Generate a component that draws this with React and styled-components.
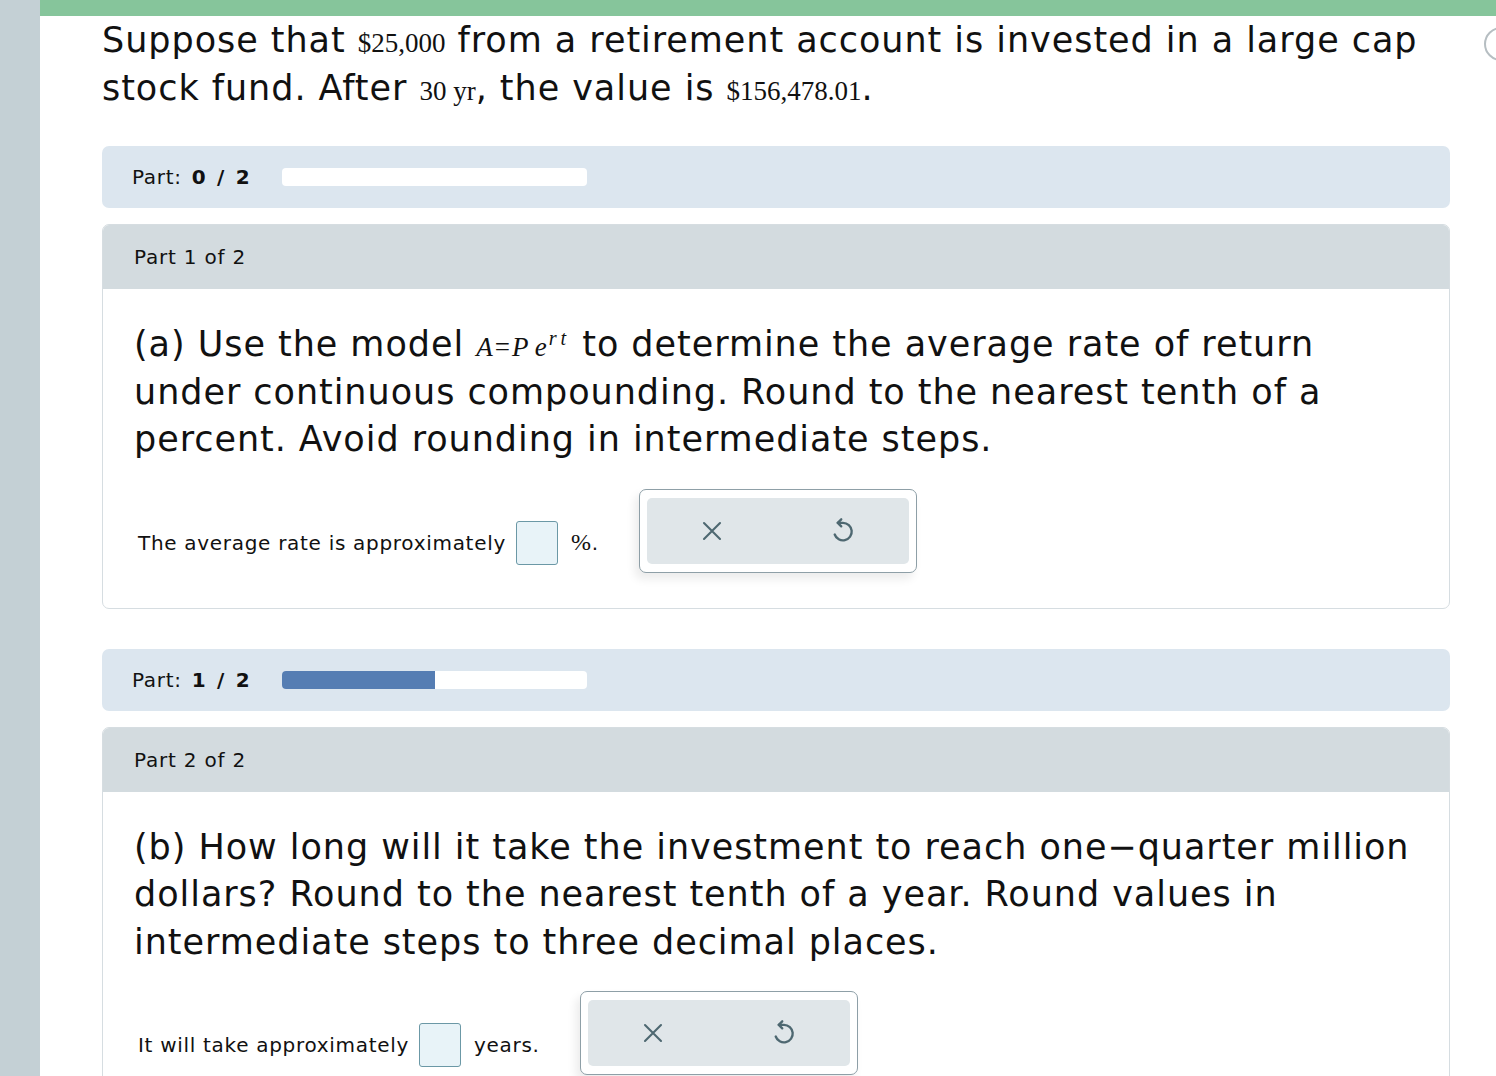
import React from "react";
import styled, { createGlobalStyle } from "styled-components";

const GlobalStyle = createGlobalStyle`
  html, body {
    margin: 0;
    padding: 0;
    background: #ffffff;
    overflow: hidden;
  }
  body {
    font-family: "DejaVu Sans", Verdana, sans-serif;
    color: #111;
  }
`;

const Page = styled.div`
  display: flex;
  min-height: 1076px;
  position: relative;
`;

const Sidebar = styled.div`
  width: 40px;
  flex-shrink: 0;
  background: #c4d0d5;
`;

const Main = styled.div`
  flex: 1;
  display: flex;
  flex-direction: column;
`;

const TopBar = styled.div`
  height: 16px;
  background: #86c59b;
`;

const Content = styled.div`
  padding: 0 46px 0 62px;
  display: flex;
  flex-direction: column;
`;

const Prompt = styled.p`
  margin: 0;
  font-size: 35px;
  letter-spacing: 0.95px;
  line-height: 48px;
  padding-right: 20px;
`;

const Math = styled.span`
  font-family: "Liberation Serif", "Times New Roman", serif;
  font-size: 27px;
  letter-spacing: 0;
  line-height: 1;
  font-style: ${(p) => (p.$italic ? "italic" : "normal")};
`;

const Op = styled.span`
  font-style: normal;
  margin: 0 2px;
`;

const Sup = styled.sup`
  font-size: 0.75em;
  vertical-align: 0.55em;
  line-height: 0;
  letter-spacing: 4px;
  margin-left: 2px;
`;

const ProgressBar = styled.div`
  margin-top: ${(p) => p.$top}px;
  height: 62px;
  background: #dce6ef;
  border-radius: 7px;
  display: flex;
  align-items: center;
  padding-left: 30px;
  font-size: 20px;
  letter-spacing: 0.7px;
`;

const PartLabel = styled.span`
  width: 150px;
  word-spacing: 3px;
  b {
    font-weight: bold;
  }
`;

const Track = styled.div`
  width: 305px;
  height: 18px;
  background: #ffffff;
  border-radius: 4px;
  overflow: hidden;
`;

const Fill = styled.div`
  height: 100%;
  background: #557db3;
`;

const Card = styled.div`
  margin-top: 16px;
  border: 1px solid #d6dde1;
  border-radius: 7px;
  overflow: hidden;
  background: #fff;
`;

const CardHeader = styled.div`
  height: 64px;
  background: #d3dbdf;
  display: flex;
  align-items: center;
  padding-left: 31px;
  font-size: 20px;
  letter-spacing: 0.8px;
`;

const CardBody = styled.div`
  padding: 32px 32px 35px 31px;
`;

const Question = styled.p`
  margin: 0;
  font-size: 35px;
  letter-spacing: 0.95px;
  line-height: 47.5px;
`;

const AnswerRow = styled.div`
  margin-top: 25px;
  display: flex;
  align-items: center;
  font-size: 20px;
  letter-spacing: 0.7px;
`;

const AnswerText = styled.span`
  padding-left: 4px;
  margin-top: 24px;
  display: flex;
  align-items: center;
`;

const Blank = styled.span`
  display: inline-block;
  width: 40px;
  height: 42px;
  margin: 0 13px 0 10px;
  background: #e8f3f8;
  border: 1.5px solid #6b98a6;
  border-radius: 3px;
`;

const Unit = styled.span`
  font-family: ${(p) => (p.$serif ? '"Liberation Serif", serif' : "inherit")};
  font-size: ${(p) => (p.$serif ? "24px" : "20px")};
`;

const Tools = styled.div`
  margin-left: ${(p) => p.$gap}px;
  width: 262px;
  height: 66px;
  padding: 8px 7px 8px;
  border: 1.5px solid #8e9fa7;
  border-radius: 7px;
  background: #fff;
  box-shadow: -4px 6px 10px rgba(0, 0, 0, 0.08);
`;

const ToolInner = styled.div`
  height: 100%;
  background: #e0e6e9;
  border-radius: 5px;
  display: grid;
  grid-template-columns: 1fr 1fr;
`;

const ToolButton = styled.button`
  border: none;
  background: transparent;
  display: flex;
  align-items: center;
  justify-content: center;
  color: #4e6871;
  padding: 0;
  cursor: pointer;
`;

const EdgeButton = styled.div`
  position: absolute;
  left: 1484px;
  top: 27px;
  width: 30px;
  height: 30px;
  border: 2px solid #b6bec2;
  border-radius: 50%;
  background: #fff;
`;

const CloseIcon = () => (
  <svg width="24" height="24" viewBox="0 0 24 24" fill="none" stroke="currentColor" strokeWidth="2.1" strokeLinecap="round">
    <path d="M4 4L20 20M20 4L4 20" />
  </svg>
);

const UndoIcon = () => (
  <svg width="28" height="28" viewBox="0 0 24 24" fill="none" stroke="currentColor" strokeWidth="2" strokeLinecap="round" strokeLinejoin="round">
    <path d="M10.5 2L7.5 5L10.5 8" />
    <path d="M7.5 5H12a7.5 7.5 0 1 1-7.1 10" />
  </svg>
);

const ToolPanel = ({ gap }) => (
  <Tools $gap={gap}>
    <ToolInner>
      <ToolButton aria-label="clear">
        <CloseIcon />
      </ToolButton>
      <ToolButton aria-label="undo">
        <UndoIcon />
      </ToolButton>
    </ToolInner>
  </Tools>
);

const Progress = ({ done, total, top }) => (
  <ProgressBar $top={top}>
    <PartLabel>
      Part: <b>{done} / {total}</b>
    </PartLabel>
    <Track>
      <Fill style={{ width: `${(done / total) * 100}%` }} />
    </Track>
  </ProgressBar>
);

export default function App() {
  return (
    <>
      <GlobalStyle />
      <Page>
        <Sidebar />
        <Main>
          <TopBar />
          <Content>
            <Prompt>
              Suppose that <Math>$25,000</Math> from a retirement account is invested in a large cap
              stock fund. After <Math>30 yr</Math>, the value is <Math>$156,478.01</Math>.
            </Prompt>

            <Progress done={0} total={2} top={34} />
            <Card>
              <CardHeader>Part 1 of 2</CardHeader>
              <CardBody>
                <Question>
                  (a) Use the model{" "}
                  <Math $italic>
                    A<Op>=</Op>P e<Sup>rt</Sup>
                  </Math>{" "}
                  to determine the average rate of return under continuous compounding. Round to
                  the nearest tenth of a percent. Avoid rounding in intermediate steps.
                </Question>
                <AnswerRow>
                  <AnswerText>
                    The average rate is approximately
                    <Blank />
                    <Unit $serif>%</Unit>
                    <Unit>.</Unit>
                  </AnswerText>
                  <ToolPanel gap={40} />
                </AnswerRow>
              </CardBody>
            </Card>

            <Progress done={1} total={2} top={40} />
            <Card>
              <CardHeader>Part 2 of 2</CardHeader>
              <CardBody>
                <Question>
                  (b) How long will it take the investment to reach one&minus;quarter million
                  dollars? Round to the nearest tenth of a year. Round values in intermediate steps
                  to three decimal places.
                </Question>
                <AnswerRow>
                  <AnswerText>
                    It will take approximately
                    <Blank />
                    <Unit>years.</Unit>
                  </AnswerText>
                  <ToolPanel gap={40} />
                </AnswerRow>
              </CardBody>
            </Card>
          </Content>
        </Main>
        <EdgeButton />
      </Page>
    </>
  );
}
